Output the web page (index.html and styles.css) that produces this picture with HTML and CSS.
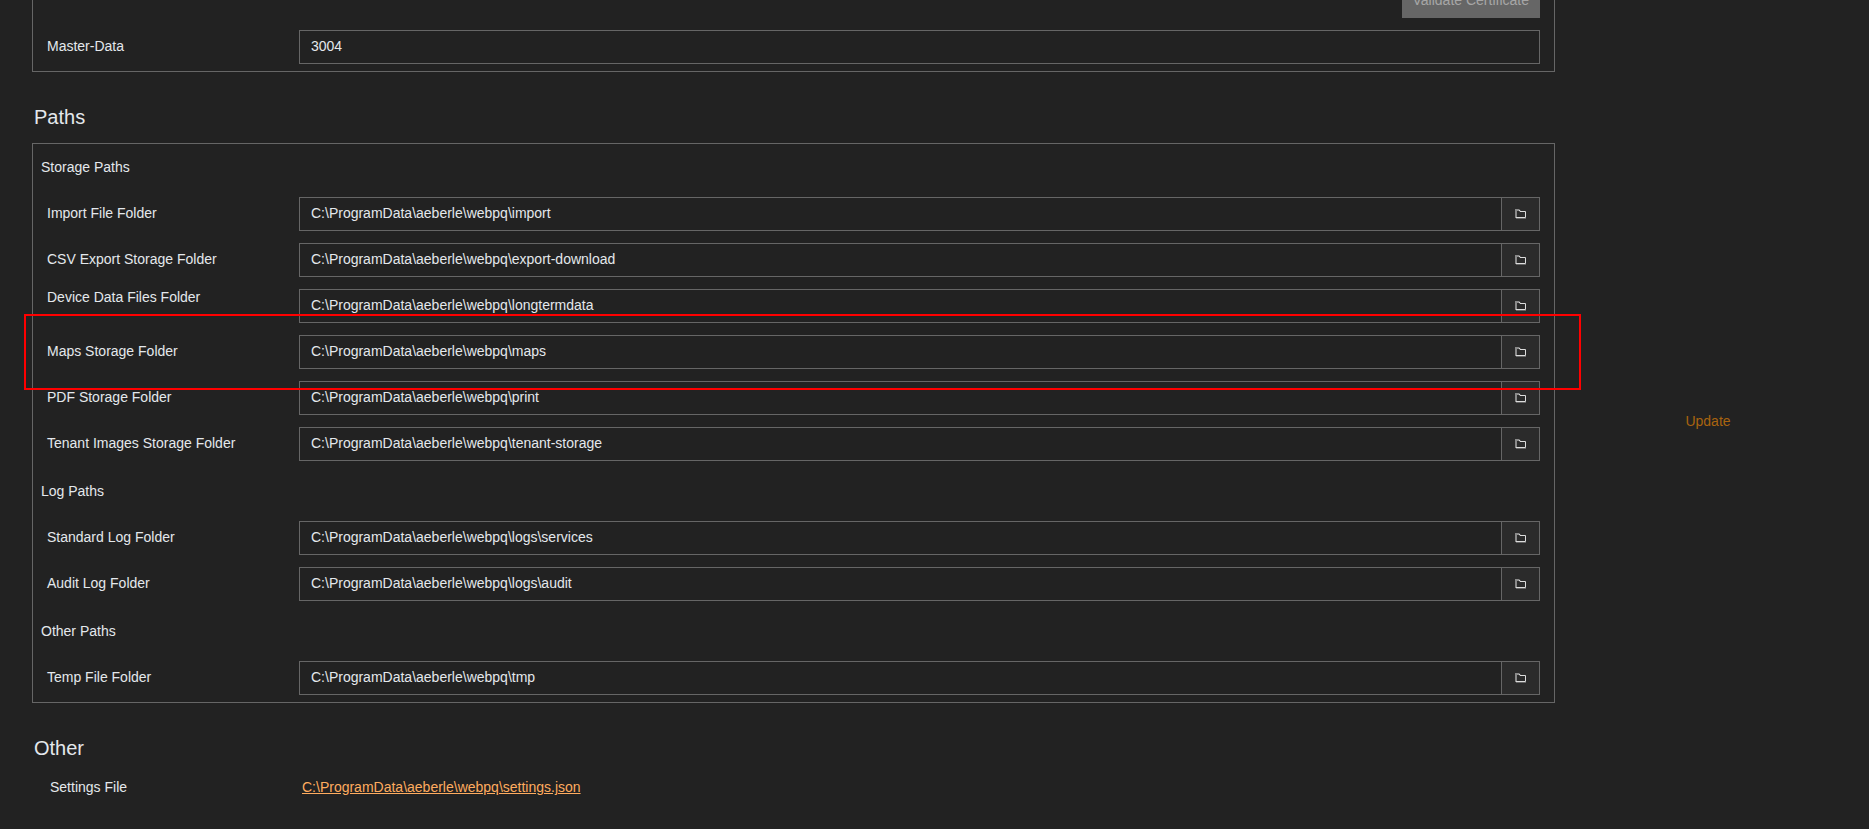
FILE: index.html
```html
<!DOCTYPE html>
<html lang="en">
<head>
  <meta charset="utf-8">
  <title>Settings</title>
  <link rel="stylesheet" href="styles.css">
</head>
<body>

  <!-- folder icon, shared by all browse buttons -->
  <svg class="sprite" width="0" height="0">
    <symbol id="folder" viewBox="0 0 11 10">
      <path d="M1 9V0.500M0 1h4.500" fill="none" stroke="#8a8a8a" stroke-width="2"/>
      <path d="M1 9.500h10" fill="none" stroke="#666" stroke-width="1"/>
      <path d="M4 1.500h1v1h5.500v6H1" fill="none" stroke="#dcdcdc" stroke-width="1"/>
    </symbol>
  </svg>

  <div class="page">
    <main class="settings">

      <section class="panel panel-cut">
        <div class="actions">
          <button class="validate" type="button" disabled>Validate Certificate</button>
        </div>
        <div class="row">
          <label for="master">Master-Data</label>
          <div class="field"><input id="master" type="text" value="3004"></div>
        </div>
      </section>

      <h2>Paths</h2>
      <section class="panel">
        <h3>Storage Paths</h3>
        <div class="row">
          <label for="import">Import File Folder</label>
          <div class="field">
            <input id="import" type="text" value="C:\ProgramData\aeberle\webpq\import">
            <button class="browse" type="button" aria-label="Browse"><svg><use href="#folder"/></svg></button>
          </div>
        </div>
        <div class="row">
          <label for="csv">CSV Export Storage Folder</label>
          <div class="field">
            <input id="csv" type="text" value="C:\ProgramData\aeberle\webpq\export-download">
            <button class="browse" type="button" aria-label="Browse"><svg><use href="#folder"/></svg></button>
          </div>
        </div>
        <div class="row row-top">
          <label for="device">Device Data Files Folder</label>
          <div class="field">
            <input id="device" type="text" value="C:\ProgramData\aeberle\webpq\longtermdata">
            <button class="browse" type="button" aria-label="Browse"><svg><use href="#folder"/></svg></button>
          </div>
        </div>
        <div class="row marked">
          <label for="maps">Maps Storage Folder</label>
          <div class="field">
            <input id="maps" type="text" value="C:\ProgramData\aeberle\webpq\maps">
            <button class="browse" type="button" aria-label="Browse"><svg><use href="#folder"/></svg></button>
          </div>
        </div>
        <div class="row">
          <label for="pdf">PDF Storage Folder</label>
          <div class="field">
            <input id="pdf" type="text" value="C:\ProgramData\aeberle\webpq\print">
            <button class="browse" type="button" aria-label="Browse"><svg><use href="#folder"/></svg></button>
          </div>
        </div>
        <div class="row">
          <label for="tenant">Tenant Images Storage Folder</label>
          <div class="field">
            <input id="tenant" type="text" value="C:\ProgramData\aeberle\webpq\tenant-storage">
            <button class="browse" type="button" aria-label="Browse"><svg><use href="#folder"/></svg></button>
          </div>
        </div>

        <h3>Log Paths</h3>
        <div class="row">
          <label for="log">Standard Log Folder</label>
          <div class="field">
            <input id="log" type="text" value="C:\ProgramData\aeberle\webpq\logs\services">
            <button class="browse" type="button" aria-label="Browse"><svg><use href="#folder"/></svg></button>
          </div>
        </div>
        <div class="row">
          <label for="audit">Audit Log Folder</label>
          <div class="field">
            <input id="audit" type="text" value="C:\ProgramData\aeberle\webpq\logs\audit">
            <button class="browse" type="button" aria-label="Browse"><svg><use href="#folder"/></svg></button>
          </div>
        </div>

        <h3>Other Paths</h3>
        <div class="row">
          <label for="temp">Temp File Folder</label>
          <div class="field">
            <input id="temp" type="text" value="C:\ProgramData\aeberle\webpq\tmp">
            <button class="browse" type="button" aria-label="Browse"><svg><use href="#folder"/></svg></button>
          </div>
        </div>
      </section>

      <h2>Other</h2>
      <div class="file-row">
        <span class="file-label">Settings File</span>
        <a href="#">C:\ProgramData\aeberle\webpq\settings.json</a>
      </div>
    </main>

    <aside class="side">
      <button class="update" type="button" disabled>Update</button>
    </aside>
  </div>

</body>
</html>
```
FILE: styles.css
```css
* {
  box-sizing: border-box;
}

body {
  margin: 0;
  background: #222;
  color: #e4e8ec;
  font: 14px/16px "Liberation Sans", Arial, sans-serif;
}

.sprite {
  position: absolute;
}

.page {
  display: flex;
  min-height: 100vh;
  overflow: hidden;
}

.settings {
  flex: 1;
  padding-left: 32px;
}

.panel {
  display: flex;
  flex-direction: column;
  gap: 12px;
  padding: 5px 14px 7px 8px;
  border: 1px solid #666;
}

/* this panel is scrolled off at the top */
.panel-cut {
  margin-top: -22px;
}

.actions {
  display: flex;
  justify-content: flex-end;
}

h2 {
  margin: 33px 0 14px;
  padding-left: 2px;
  font-size: 20px;
  line-height: 24px;
  font-weight: normal;
}

h3 {
  margin: 0;
  font-size: 14px;
  line-height: 36px;
  font-weight: normal;
}

.row {
  display: flex;
  align-items: center;
  padding-left: 6px;
}

.row label {
  flex: 0 0 252px;
  padding-bottom: 2px;
}

.row-top label {
  align-self: flex-start;
}

.field {
  display: flex;
  flex: 1;
  height: 34px;
  border: 1px solid #666;
}

.field input {
  flex: 1;
  min-width: 0;
  padding: 0 11px 2px;
  border: 0;
  outline: 0;
  background: none;
  color: inherit;
  font: inherit;
}

button {
  border: 0;
  font: inherit;
}

.browse {
  display: flex;
  align-items: center;
  justify-content: center;
  width: 38px;
  padding: 0;
  border-left: 1px solid #666;
  background: #2b2b2b;
}

.browse svg {
  width: 11px;
  height: 10px;
}

.validate {
  height: 34px;
  padding: 0 11px 2px;
  background: #666;
  color: #a6a6a6;
}

/* red frame around the maps folder */
.marked {
  position: relative;
}

.marked::after {
  content: "";
  position: absolute;
  inset: -21px -41px -21px -17px;
  border: 2px solid #f00;
  pointer-events: none;
}

.file-row {
  display: flex;
  padding: 5px 0 0 18px;
}

.file-label {
  flex: 0 0 252px;
}

a {
  color: #ffac5f;
}

.side {
  display: flex;
  align-items: center;
  justify-content: center;
  width: 314px;
  padding: 12px 8px 0 0;
}

.update {
  background: none;
  color: #a9640f;
}
```
